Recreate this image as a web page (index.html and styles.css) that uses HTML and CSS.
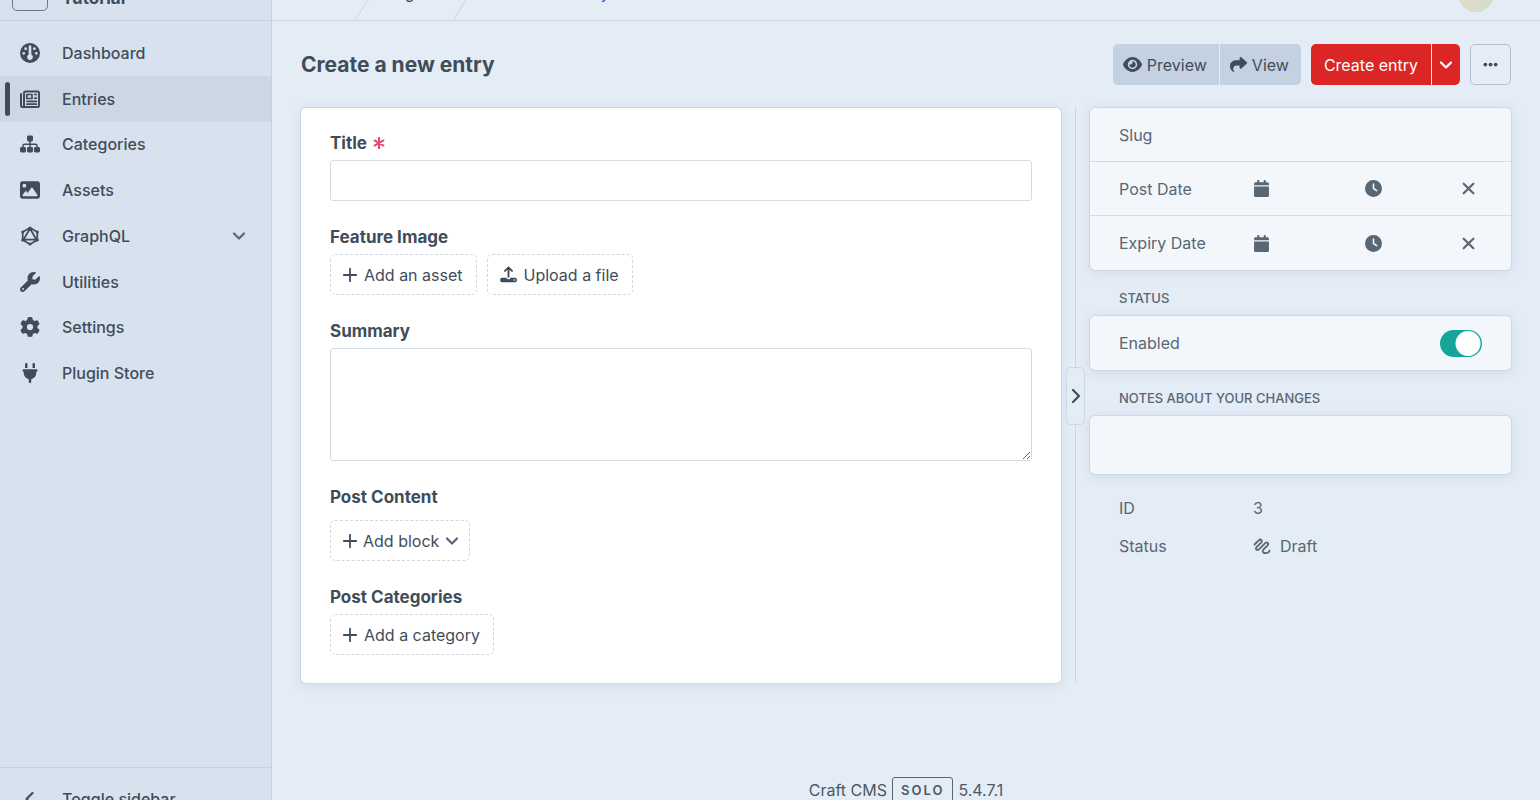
FILE: index.html
```html
<!DOCTYPE html>
<html lang="en">
<head>
    <meta charset="UTF-8">
    <meta name="viewport" content="width=device-width, initial-scale=1.0">
    <title>Create a new entry - Tutorial</title>
    <link rel="stylesheet" href="styles.css">
</head>
<body>
    <!-- Shared icon shapes -->
    <svg class="sprite" aria-hidden="true">
        <symbol id="chevron-down" viewBox="0 0 14 14"><path d="M2 4.500l5 5 5-5" fill="none" stroke="currentColor" stroke-width="2.200" stroke-linecap="round" stroke-linejoin="round"/></symbol>
        <symbol id="plus" viewBox="0 0 14 14"><path d="M7 .8v12.400M.8 7h12.400" fill="none" stroke="currentColor" stroke-width="1.800" stroke-linecap="round"/></symbol>
        <symbol id="calendar" viewBox="0 0 448 512"><path d="M96 32V64H48C21.500 64 0 85.500 0 112v48H448V112c0-26.500-21.500-48-48-48H352V32c0-17.700-14.300-32-32-32s-32 14.300-32 32V64H160V32c0-17.700-14.300-32-32-32S96 14.300 96 32zM448 192H0V464c0 26.500 21.500 48 48 48H400c26.500 0 48-21.500 48-48V192z"/></symbol>
        <symbol id="clock" viewBox="0 0 512 512"><path fill-rule="evenodd" d="M256 0a256 256 0 1 1 0 512A256 256 0 1 1 256 0zM232 120V256c0 8 4 15.500 10.700 20l96 64c11 7.400 25.900 4.400 33.300-6.700s4.400-25.900-6.700-33.300L280 243.200V120c0-13.300-10.700-24-24-24s-24 10.700-24 24z"/></symbol>
        <symbol id="remove" viewBox="0 0 14 14"><path d="M2.500 2.500l9 9M11.500 2.500l-9 9" fill="none" stroke="currentColor" stroke-width="2" stroke-linecap="round"/></symbol>
    </svg>

    <div class="shell">
        <aside class="sidebar">
            <a href="#" class="site">
                <span class="site-icon"></span>
                <span class="site-name">Tutorial</span>
            </a>
            <nav>
                <ul class="nav-list">
                    <li><a href="#">
                        <svg class="nav-icon" viewBox="0 0 512 512"><path fill-rule="evenodd" d="M0 256a256 256 0 1 1 512 0A256 256 0 1 1 0 256zM256 432c41 0 74-32 74-74c0-27-17-50-40-62V92c0-18-15-32-34-32s-34 14-34 32V296c-23 12-40 35-40 62c0 42 33 74 74 74zM144 180a35 35 0 1 0 0-70 35 35 0 1 0 0 70zM96 298a35 35 0 1 0 0-70 35 35 0 1 0 0 70zM416 298a35 35 0 1 0 0-70 35 35 0 1 0 0 70zM368 180a35 35 0 1 0 0-70 35 35 0 1 0 0 70z"/></svg>
                        <span>Dashboard</span></a></li>
                    <li class="active"><a href="#">
                        <svg class="nav-icon" viewBox="0 0 20 20"><g fill="none" stroke="currentColor" stroke-linecap="round" stroke-linejoin="round"><path d="M1 5v11.500a1.500 1.500 0 0 0 3 0V4a1.500 1.500 0 0 1 1.500-1.500h12A1.500 1.500 0 0 1 19 4v12.500a1.500 1.500 0 0 1-1.500 1.500h-15" stroke-width="2"/><path d="M6.800 5.500h5.200v4h-5.200zM14.800 5.500h1.500M14.800 9.200h1.500M7 12.300h9.300M7 15.200h9.300" stroke-width="1.700"/></g></svg>
                        <span>Entries</span></a></li>
                    <li><a href="#">
                        <svg class="nav-icon" viewBox="0 0 20 20"><rect x="7" y="1.500" width="6" height="6" rx="1.400"/><rect x="0" y="13" width="6" height="5.500" rx="1.400"/><rect x="7" y="13" width="6" height="5.500" rx="1.400"/><rect x="14" y="13" width="6" height="5.500" rx="1.400"/><path d="M10 7v7M3 14v-2.300a1.500 1.500 0 0 1 1.500-1.500h11a1.500 1.500 0 0 1 1.500 1.500V14" fill="none" stroke="currentColor" stroke-width="1.500"/></svg>
                        <span>Categories</span></a></li>
                    <li><a href="#">
                        <svg class="nav-icon" viewBox="0 0 512 512"><path fill-rule="evenodd" d="M0 96C0 60.700 28.700 32 64 32H448c35.300 0 64 28.700 64 64V416c0 35.300-28.700 64-64 64H64c-35.300 0-64-28.700-64-64V96zM323.800 202.500c-4.500-6.600-11.900-10.500-19.800-10.500s-15.400 3.900-19.800 10.500l-87 127.600L170.700 297c-4.600-5.700-11.500-9-18.700-9s-14.200 3.300-18.700 9l-64 80c-5.800 7.200-6.900 17.100-2.900 25.400s12.400 13.600 21.600 13.600H424c8.900 0 17.100-4.900 21.200-12.800s3.600-17.400-1.400-24.700l-120-176zM112 192a48 48 0 1 0 0-96 48 48 0 1 0 0 96z"/></svg>
                        <span>Assets</span></a></li>
                    <li><a href="#">
                        <svg class="nav-icon" viewBox="0 0 20 20"><path d="M10 1.800l7.300 4.100v8.200L10 18.200l-7.300-4.100V5.900zM10 2.500l6.500 11.200h-13z" fill="none" stroke="currentColor" stroke-width="1.700" stroke-linejoin="round"/><circle cx="10" cy="1.900" r="1.500"/><circle cx="17.300" cy="5.900" r="1.500"/><circle cx="17.300" cy="14.100" r="1.500"/><circle cx="10" cy="18.100" r="1.500"/><circle cx="2.700" cy="14.100" r="1.500"/><circle cx="2.700" cy="5.900" r="1.500"/></svg>
                        <span>GraphQL</span>
                        <svg class="nav-chevron"><use href="#chevron-down"/></svg></a></li>
                    <li><a href="#">
                        <svg class="nav-icon" viewBox="0 0 512 512"><path fill-rule="evenodd" d="M352 320c88.400 0 160-71.600 160-160c0-15.300-2.200-30.100-6.200-44.200c-3.100-10.800-16.400-13.200-24.300-5.300l-76.800 76.800c-3 3-7.100 4.700-11.300 4.700H336c-8.800 0-16-7.200-16-16V118.600c0-4.200 1.700-8.300 4.700-11.300l76.800-76.800c7.900-7.900 5.400-21.200-5.300-24.300C382.100 2.200 367.300 0 352 0C263.600 0 192 71.600 192 160c0 19.100 3.400 37.500 9.500 54.500L19.900 396.100C7.200 408.800 0 426.100 0 444.100C0 481.600 30.400 512 67.900 512c18 0 35.300-7.200 48-19.900L297.500 310.500c17 6.200 35.400 9.500 54.500 9.500zM80 408a24 24 0 1 1 0 48 24 24 0 1 1 0-48z"/></svg>
                        <span>Utilities</span></a></li>
                    <li><a href="#">
                        <svg class="nav-icon" viewBox="0 0 512 512"><path fill-rule="evenodd" d="M495.900 166.600c3.200 8.700 .5 18.400-6.400 24.600l-43.300 39.400c1.100 8.300 1.700 16.800 1.700 25.400s-.6 17.100-1.700 25.400l43.300 39.400c6.900 6.200 9.600 15.900 6.400 24.600c-4.400 11.900-9.700 23.300-15.800 34.300l-4.700 8.100c-6.600 11-14 21.400-22.100 31.200c-5.900 7.200-15.700 9.600-24.500 6.800l-55.700-17.700c-13.400 10.300-28.200 18.900-44 25.400l-12.500 57.100c-2 9.100-9 16.300-18.200 17.800c-13.800 2.300-28 3.500-42.500 3.500s-28.700-1.200-42.500-3.500c-9.200-1.500-16.200-8.700-18.200-17.800l-12.500-57.100c-15.800-6.500-30.600-15.100-44-25.400L83.100 425.900c-8.800 2.800-18.600 .3-24.500-6.800c-8.100-9.800-15.500-20.200-22.100-31.200l-4.700-8.100c-6.100-11-11.400-22.400-15.800-34.300c-3.200-8.700-.5-18.400 6.400-24.600l43.300-39.400C64.600 273.100 64 264.600 64 256s.6-17.100 1.700-25.400L22.400 191.200c-6.900-6.200-9.600-15.900-6.400-24.600c4.400-11.900 9.700-23.300 15.800-34.300l4.700-8.100c6.600-11 14-21.400 22.100-31.200c5.900-7.200 15.700-9.600 24.500-6.800l55.700 17.700c13.400-10.300 28.200-18.900 44-25.400l12.500-57.100c2-9.100 9-16.300 18.200-17.800C227.300 1.200 241.500 0 256 0s28.700 1.200 42.500 3.500c9.200 1.500 16.200 8.700 18.200 17.800l12.500 57.100c15.800 6.500 30.600 15.100 44 25.400l55.700-17.700c8.800-2.800 18.600-.3 24.500 6.800c8.100 9.800 15.500 20.200 22.100 31.200l4.700 8.100c6.100 11 11.400 22.400 15.800 34.300zM256 336a80 80 0 1 0 0-160 80 80 0 1 0 0 160z"/></svg>
                        <span>Settings</span></a></li>
                    <li><a href="#">
                        <svg class="nav-icon" viewBox="-64 0 512 512"><path d="M96 0C78 0 64 14 64 32v96h64V32c0-18-14-32-32-32zM288 0c-18 0-32 14-32 32v96h64V32c0-18-14-32-32-32zM32 160c-18 0-32 14-32 32s14 32 32 32v32c0 77.400 55 142 128 156.800V480c0 18 14 32 32 32s32-14 32-32V412.800C297 398 352 333.400 352 256V224c18 0 32-14 32-32s-14-32-32-32H32z"/></svg>
                        <span>Plugin Store</span></a></li>
                </ul>
            </nav>
            <button type="button" class="sidebar-toggle">
                <svg class="nav-icon" viewBox="0 0 20 20"><path d="M12.500 4l-6 6 6 6" fill="none" stroke="currentColor" stroke-width="2.200" stroke-linecap="round" stroke-linejoin="round"/></svg>
                <span>Toggle sidebar</span>
            </button>
        </aside>

        <div class="page">
            <header class="topbar">
                <ol class="crumbs">
                    <li class="crumb-site"></li>
                    <li class="crumb-section"><a href="#">Blog</a></li>
                    <li class="crumb-current"><a href="#">Create a new entry</a></li>
                </ol>
                <button type="button" class="avatar" aria-label="My account"></button>
            </header>

            <main>
                <div class="title-row">
                    <h1>Create a new entry</h1>
                    <div class="btn-group">
                        <button type="button" class="btn">
                            <svg class="eye" viewBox="0 0 576 512"><path fill-rule="evenodd" d="M288 32c-80.800 0-145.500 36.800-192.600 80.600C48.600 156 17.300 208 2.500 243.700c-3.300 7.900-3.300 16.700 0 24.600C17.300 304 48.600 356 95.400 399.400C142.500 443.200 207.200 480 288 480s145.500-36.800 192.600-80.600c46.800-43.500 78.100-95.400 93-131.100c3.300-7.900 3.300-16.700 0-24.600c-14.900-35.700-46.200-87.700-93-131.100C433.500 68.800 368.800 32 288 32zM144 256a144 144 0 1 1 288 0 144 144 0 1 1 -288 0zm144-64c0 35.300-28.700 64-64 64c-7.100 0-13.900-1.200-20.300-3.300c-5.500-1.800-11.900 1.600-11.700 7.400c.3 6.900 1.300 13.800 3.200 20.700c13.700 51.200 66.400 81.600 117.600 67.900s81.600-66.400 67.900-117.600c-11.100-41.500-47.800-69.400-88.600-71.100c-5.800-.2-9.200 6.100-7.400 11.700c2.100 6.400 3.300 13.200 3.300 20.300z"/></svg>
                            Preview
                        </button>
                        <button type="button" class="btn">
                            <svg class="share" viewBox="0 0 512 512"><path d="M307 34.800c-11.500 5.100-19 16.600-19 29.200v64H176C78.800 128 0 206.800 0 304C0 417.300 81.500 467.900 100.200 478.100c2.500 1.400 5.300 1.900 8.100 1.900c10.900 0 19.700-8.900 19.700-19.700c0-7.500-4.300-14.400-9.800-19.500C108.800 431.900 96 414.400 96 384c0-53 43-96 96-96h96v64c0 12.600 7.400 24.100 19 29.200s25 3 34.400-5.400l160-144c6.700-6.100 10.600-14.700 10.600-23.800s-3.800-17.700-10.600-23.800l-160-144c-9.400-8.500-22.900-10.600-34.400-5.400z"/></svg>
                            View
                        </button>
                    </div>
                    <div class="btn-group">
                        <button type="submit" form="entry-form" class="btn submit">Create entry</button>
                        <button type="button" class="btn submit menu" aria-label="More save options"><svg class="chevron"><use href="#chevron-down"/></svg></button>
                    </div>
                    <button type="button" class="btn outline" aria-label="Actions">
                        <svg class="dots" viewBox="0 0 16 16"><circle cx="2.500" cy="8" r="2"/><circle cx="8" cy="8" r="2"/><circle cx="13.500" cy="8" r="2"/></svg>
                    </button>
                </div>

                <div class="columns">
                    <form id="entry-form" class="card">
                        <div class="field">
                            <label for="title">Title
                                <svg class="required" viewBox="0 0 14 14"><path d="M7 1v12M1.800 4l10.400 6M12.200 4L1.800 10" fill="none" stroke="currentColor" stroke-width="2.300" stroke-linecap="round"/></svg>
                            </label>
                            <input type="text" id="title" class="text">
                        </div>
                        <div class="field">
                            <h2>Feature Image</h2>
                            <div class="buttons">
                                <button type="button" class="btn dashed"><svg class="plus"><use href="#plus"/></svg>Add an asset</button>
                                <button type="button" class="btn dashed">
                                    <svg class="upload" viewBox="0 0 18 18"><path d="M9 11.500V2M5.300 5.200L9 1.500l3.700 3.700" fill="none" stroke="currentColor" stroke-width="2" stroke-linecap="round" stroke-linejoin="round"/><path fill-rule="evenodd" d="M2 12.500h4.800c.3 1 1.100 1.600 2.200 1.600s1.900-.6 2.200-1.600H16a1.800 1.800 0 0 1 1.800 1.800v1a1.800 1.800 0 0 1-1.800 1.800H2a1.800 1.800 0 0 1-1.800-1.800v-1A1.800 1.800 0 0 1 2 12.500zM15 14a.8.8 0 1 0 0 1.600.8.8 0 1 0 0-1.600z"/></svg>Upload a file
                                </button>
                            </div>
                        </div>
                        <div class="field">
                            <label for="summary">Summary</label>
                            <textarea id="summary" class="text"></textarea>
                        </div>
                        <div class="field matrix">
                            <h2>Post Content</h2>
                            <div class="buttons">
                                <button type="button" class="btn dashed add-block"><svg class="plus"><use href="#plus"/></svg>Add block<svg class="chevron"><use href="#chevron-down"/></svg></button>
                            </div>
                        </div>
                        <div class="field">
                            <h2>Post Categories</h2>
                            <div class="buttons">
                                <button type="button" class="btn dashed"><svg class="plus"><use href="#plus"/></svg>Add a category</button>
                            </div>
                        </div>
                    </form>

                    <div class="divider">
                        <button type="button" class="divider-handle" aria-label="Hide details">
                            <svg viewBox="0 0 12 18"><path d="M3 3l6 6-6 6" fill="none" stroke="currentColor" stroke-width="2.200" stroke-linecap="round" stroke-linejoin="round"/></svg>
                        </button>
                    </div>

                    <aside class="details">
                        <div class="panel">
                            <div class="row">
                                <label for="slug">Slug</label>
                                <input type="text" id="slug" class="bare">
                            </div>
                            <div class="row">
                                <label for="post-date">Post Date</label>
                                <div class="date"><svg><use href="#calendar"/></svg><input type="text" id="post-date" class="bare"></div>
                                <div class="time"><svg><use href="#clock"/></svg><input type="text" class="bare" aria-label="Post time"></div>
                                <button type="button" class="clear" aria-label="Clear post date"><svg><use href="#remove"/></svg></button>
                            </div>
                            <div class="row">
                                <label for="expiry-date">Expiry Date</label>
                                <div class="date"><svg><use href="#calendar"/></svg><input type="text" id="expiry-date" class="bare"></div>
                                <div class="time"><svg><use href="#clock"/></svg><input type="text" class="bare" aria-label="Expiry time"></div>
                                <button type="button" class="clear" aria-label="Clear expiry date"><svg><use href="#remove"/></svg></button>
                            </div>
                        </div>

                        <h3>Status</h3>
                        <div class="panel">
                            <div class="row">
                                <label for="enabled">Enabled</label>
                                <input type="checkbox" id="enabled" class="switch" role="switch" checked>
                            </div>
                        </div>

                        <h3><label for="notes">Notes about your changes</label></h3>
                        <textarea id="notes" class="panel notes"></textarea>

                        <dl class="meta">
                            <dt>ID</dt>
                            <dd>3</dd>
                            <dt>Status</dt>
                            <dd>
                                <svg class="draft" viewBox="0 0 18 18"><path d="M1.500 7.500l4.200-4.200c1.800-1.800 4.200.3 2.600 2.100L3.600 10.200c-1.700 1.900.5 3.900 2.300 2.200l6.300-6.300c1.900-1.800 4.100.4 2.400 2.200L10.300 12.600c-1.700 1.900.3 3.900 2 3.300M12.300 15.900c1.600.6 3.600-.4 4.200-2.200" fill="none" stroke="currentColor" stroke-width="1.800" stroke-linecap="round"/></svg>
                                Draft
                            </dd>
                        </dl>
                    </aside>
                </div>
            </main>

            <footer>
                <span>Craft CMS</span>
                <span class="edition">Solo</span>
                <span>5.4.7.1</span>
            </footer>
        </div>
    </div>
</body>
</html>
```
FILE: styles.css
```css
* {
    box-sizing: border-box;
}
body {
    margin: 0;
    overflow: hidden;
    font-family: Inter, "Liberation Sans", sans-serif;
    font-size: 16px;
    line-height: 24px;
    color: #3f4d5a;
    background: #e4ecf6;
}
h1, h2, h3, ul, ol, dl, dd {
    margin: 0;
    padding: 0;
}
ul, ol {
    list-style: none;
}
a {
    color: inherit;
    text-decoration: none;
}
button, input, textarea {
    font: inherit;
    color: inherit;
    margin: 0;
}
button {
    cursor: pointer;
}
svg {
    display: block;
    flex: none;
    fill: currentColor;
}
.sprite {
    display: none;
}

/* the view sits slightly scrolled, header and footer run past the window */
.shell {
    display: flex;
    height: calc(100vh + 63px);
    margin-top: -33px;
}

/* Sidebar */
.sidebar {
    display: flex;
    flex-direction: column;
    flex: none;
    width: 272px;
    background: #d8e2ee;
    border-right: 1px solid #c5d1df;
    font-weight: 500;
}
.site {
    display: flex;
    align-items: flex-end;
    gap: 14px;
    height: 54px;
    padding: 0 12px 9px;
    border-bottom: 1px solid #c5d1df;
    font-size: 17px;
    line-height: 26px;
    font-weight: 700;
}
.site-icon {
    width: 36px;
    height: 36px;
    border: 1px solid #6b7885;
    border-radius: 5px;
}
.nav-list {
    display: grid;
    grid-auto-rows: 1fr;
    height: 366px;
    margin-top: 9px;
}
.nav-list a {
    position: relative;
    display: flex;
    align-items: center;
    gap: 22px;
    height: 100%;
    padding: 0 25px 0 20px;
}
.active a {
    background: #cdd7e3;
}
.active a::before {
    content: "";
    position: absolute;
    left: 5px;
    top: 6px;
    bottom: 6px;
    width: 5px;
    border-radius: 3px;
    background: #3f4d5a;
}
.nav-icon {
    width: 20px;
    height: 20px;
}
.nav-chevron {
    width: 14px;
    height: 14px;
    margin-left: auto;
    color: #596673;
}
.sidebar-toggle {
    display: flex;
    align-items: center;
    gap: 22px;
    height: 63px;
    margin-top: auto;
    padding: 0 20px;
    background: none;
    border: 0;
    border-top: 1px solid #c5d1df;
    font-weight: 500;
}

/* Top bar */
.page {
    display: flex;
    flex-direction: column;
    flex: 1;
    min-width: 0;
}
.topbar {
    display: flex;
    align-items: center;
    justify-content: space-between;
    height: 54px;
    padding-right: 46px;
    border-bottom: 1px solid #c9d5e3;
    overflow: hidden;
}
.crumbs {
    display: flex;
    align-items: center;
    font-size: 14px;
    font-weight: 500;
}
.crumbs li {
    display: flex;
    align-items: center;
    height: 54px;
    padding-left: 12px;
}
.crumb-site {
    width: 100px;
}
.crumb-section {
    width: 98px;
}
.crumb-site::after,
.crumb-section::after {
    content: "";
    width: 1px;
    height: 54px;
    margin-left: auto;
    background: #c9d5e3;
    transform: skewX(-32deg);
}
.crumb-current {
    color: #2f5bd0;
}
.avatar {
    width: 36px;
    height: 36px;
    padding: 0;
    border: 0;
    border-radius: 50%;
    background: linear-gradient(100deg, #e6d9c8, #cfdfc8);
}

/* Title row */
main {
    padding: 23px 29px 0;
}
.title-row {
    display: flex;
    align-items: center;
    gap: 10px;
    margin-bottom: 23px;
}
h1 {
    flex: 1;
    font-size: 21px;
    line-height: 28px;
}
.btn-group {
    display: flex;
    gap: 1px;
}
.btn {
    display: flex;
    align-items: center;
    gap: 5px;
    height: 41px;
    padding: 0 13px;
    border: 0;
    border-radius: 5px;
    background: #c4d1e2;
    white-space: nowrap;
}
.btn-group .btn:first-child {
    border-top-right-radius: 0;
    border-bottom-right-radius: 0;
}
.btn-group .btn:last-child {
    border-top-left-radius: 0;
    border-bottom-left-radius: 0;
}
.btn-group .btn:not(.submit) {
    padding: 0 12px 0 10px;
}
.btn.submit {
    background: #dc2626;
    color: #fff;
}
.btn.submit.menu {
    padding: 0 7px;
}
.btn.outline {
    padding: 0 12px;
    background: none;
    border: 1px solid #b4c0cd;
}
.btn.dashed {
    gap: 7px;
    padding: 0 13px 0 12px;
    background: none;
    border: 1px dashed #cfd7e0;
}
.btn.dashed.add-block {
    gap: 6px;
    padding-right: 10px;
}
.add-block .chevron {
    color: #596673;
}
.eye {
    width: 19px;
    height: 17px;
}
.share {
    width: 17px;
    height: 17px;
}
.plus, .chevron {
    width: 14px;
    height: 14px;
}
.dots {
    width: 15px;
    height: 15px;
}
.upload {
    width: 17px;
    height: 17px;
}

/* Entry form */
.columns {
    display: flex;
}
.card {
    flex: 1;
    min-width: 0;
    padding: 23px 29px 28px;
    border-radius: 5px;
    background: #fff;
    box-shadow: 0 0 0 1px #cdd8e5, 0 2px 12px rgba(154, 175, 200, 0.3);
}
.field + .field {
    margin-top: 24px;
}
.field label,
.field h2 {
    display: flex;
    align-items: center;
    gap: 6px;
    margin-bottom: 5px;
    font-size: 17px;
    line-height: 24px;
    font-weight: 700;
}
.field.matrix h2 {
    margin-bottom: 11px;
}
.required {
    width: 12px;
    height: 12px;
    color: #e5486d;
}
.text {
    display: block;
    width: 100%;
    height: 41px;
    padding: 8px 10px;
    border: 1px solid #d3dde4;
    border-radius: 3px;
    background: #fff;
}
textarea.text {
    height: 113px;
}
.buttons {
    display: flex;
    gap: 10px;
}

/* Divider between form and details */
.divider {
    display: flex;
    align-items: center;
    justify-content: center;
    flex: none;
    width: 29px;
    background: linear-gradient(#c9d5e3, #c9d5e3) center / 1px 100% no-repeat;
}
.divider-handle {
    display: flex;
    align-items: center;
    justify-content: center;
    width: 19px;
    height: 58px;
    padding: 0;
    border: 1px solid #cdd8e5;
    border-radius: 5px;
    background: #e4ecf6;
}
.divider-handle svg {
    width: 12px;
    height: 18px;
}

/* Details */
.details {
    flex: none;
    width: 421px;
    color: #596673;
}
.panel {
    border-radius: 5px;
    background: #f3f7fc;
    box-shadow: 0 0 0 1px #cdd8e5, 0 2px 12px rgba(154, 175, 200, 0.3);
}
.row {
    display: flex;
    align-items: center;
    height: 54px;
    padding: 0 29px;
}
.row:not(:last-child) {
    border-bottom: 1px solid #d3dde9;
}
.row label {
    flex: none;
    width: 134px;
}
.bare {
    flex: 1;
    min-width: 0;
    padding: 0;
    border: 0;
    background: none;
    outline: none;
}
.date,
.time {
    display: flex;
    align-items: center;
    min-width: 0;
}
.date {
    flex: none;
    width: 112px;
}
.time {
    flex: 1;
}
.date svg,
.time svg {
    width: 17px;
    height: 17px;
}
.clear {
    flex: none;
    padding: 0 6px;
    border: 0;
    background: none;
}
.clear svg {
    width: 15px;
    height: 15px;
}
.details h3 {
    margin: 18px 0 8px;
    padding-left: 29px;
    font-size: 13px;
    line-height: 20px;
    font-weight: 500;
    text-transform: uppercase;
}
.switch {
    appearance: none;
    width: 42px;
    height: 27px;
    margin-left: auto;
    border-radius: 14px;
    background: radial-gradient(circle at 28px 50%, #fff 12px, #14a697 13px);
}
.notes {
    display: block;
    width: 100%;
    height: 58px;
    padding: 16px 29px;
    border: 0;
    resize: none;
}
.meta {
    display: grid;
    grid-template-columns: 134px 1fr;
    grid-auto-rows: 38px;
    align-items: center;
    margin-top: 15px;
    padding: 0 29px;
}
.meta dd {
    display: flex;
    align-items: center;
    gap: 9px;
}
.draft {
    width: 18px;
    height: 18px;
}

/* Footer */
footer {
    display: flex;
    align-items: center;
    justify-content: center;
    gap: 5px;
    height: 80px;
    margin-top: auto;
    color: #4c5966;
}
.edition {
    padding: 0 8px;
    border: 1px solid #596673;
    border-radius: 3px;
    font-size: 13px;
    font-weight: 600;
    letter-spacing: 2px;
    text-transform: uppercase;
}
```
